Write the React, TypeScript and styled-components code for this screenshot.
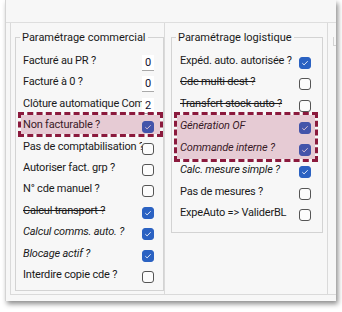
import React from "react";
import styled, { createGlobalStyle, css } from "styled-components";

const Global = createGlobalStyle`
  html, body { margin: 0; padding: 0; background: #ffffff; }
  body { font-family: Roboto, "Open Sans", sans-serif; }
  * { box-sizing: border-box; }
`;

const Stage = styled.div`
  width: 342px;
  height: 312px;
  padding-left: 5px;
  overflow: hidden;
`;

const Window = styled.div`
  width: 331px;
  height: 301px;
  background: #f7f7f7;
  border-left: 1px solid #d4d4d4;
  box-shadow: 2px 3px 5px rgba(0, 0, 0, 0.45);
  display: flex;
  flex-direction: column;
  overflow: hidden;
`;

const Header = styled.div`
  height: 23px;
  flex: none;
  border-bottom: 1px solid #dedede;
`;

const Content = styled.div`
  flex: 1;
  display: flex;
  padding: 0 0 6px 4px;
  min-height: 0;
`;

const Column = styled.div<{ $w: number; $pl: number }>`
  flex: none;
  width: ${(p) => p.$w}px;
  padding-left: ${(p) => p.$pl}px;
  border-left: 1px solid #dadada;
  border-bottom: 1px solid #dadada;
  overflow: hidden;
`;

const GroupBox = styled.fieldset<{ $w: number; $pb: number }>`
  margin: 6.5px 0 0 0;
  padding: 0 0 ${(p) => p.$pb}px 0;
  width: ${(p) => p.$w}px;
  min-width: 0;
  border: 1px solid #d3d3d3;
`;

const Legend = styled.legend<{ $ml: number }>`
  margin-left: ${(p) => p.$ml}px;
  padding: 0 2px;
  font-size: 11px;
  line-height: 15px;
  color: #1a1a1a;
  white-space: nowrap;
`;

const Rows = styled.div<{ $pl: number; $pr: number }>`
  --pl: ${(p) => p.$pl}px;
  --pr: ${(p) => p.$pr}px;
  display: flex;
  flex-direction: column;
  padding-top: 5.3px;
`;

const Highlight = styled.div<{
  $ml: number;
  $mr: number;
  $mb: number;
  $pl: number;
  $pr: number;
  $rowH: number;
}>`
  --pl: ${(p) => p.$pl}px;
  --pr: ${(p) => p.$pr}px;
  --rh: ${(p) => p.$rowH}px;
  position: relative;
  margin: -2px ${(p) => p.$mr}px ${(p) => p.$mb}px ${(p) => p.$ml}px;
  border: 3px dashed #8b1a3d;
  &::after {
    content: "";
    position: absolute;
    inset: 0;
    background: rgba(165, 30, 75, 0.2);
    pointer-events: none;
  }
`;

const Row = styled.div`
  height: var(--rh, 21.4px);
  display: flex;
  align-items: center;
  padding: 0 var(--pr) 0 var(--pl);
`;

const Label = styled.span<{ $look?: "strike" | "italic" }>`
  flex: 1;
  min-width: 0;
  overflow: hidden;
  white-space: nowrap;
  font-size: 11px;
  line-height: 15px;
  letter-spacing: -0.2px;
  color: #1a1a1a;
  ${(p) =>
    p.$look === "strike" &&
    css`
      text-decoration: line-through;
    `}
  ${(p) =>
    p.$look === "italic" &&
    css`
      font-style: italic;
    `}
`;

const Box = styled.span<{ $on?: boolean }>`
  flex: none;
  width: 12px;
  height: 12px;
  margin-top: 5px;
  border-radius: 3px;
  border: 1px solid ${(p) => (p.$on ? "#2b62c2" : "#555555")};
  background: ${(p) => (p.$on ? "#2b62c2" : "#fcfcfc")};
  display: flex;
  align-items: center;
  justify-content: center;
`;

const NumBox = styled.span`
  flex: none;
  width: 12px;
  height: 16px;
  margin-top: 5px;
  background: #ffffff;
  border-bottom: 1px solid #a9a9a9;
  font-size: 11px;
  line-height: 16px;
  text-align: center;
  color: #101030;
`;

type Item = {
  label: string;
  num?: string;
  on?: boolean;
  look?: "strike" | "italic";
};

const Check = ({ on }: { on?: boolean }) => (
  <Box $on={on}>
    {on && (
      <svg width="8" height="8" viewBox="0 0 8 8">
        <polyline
          points="1.3,4.2 3.1,5.9 6.7,2.2"
          fill="none"
          stroke="#dfe8f8"
          strokeWidth="1"
        />
      </svg>
    )}
  </Box>
);

const ItemRow = ({ item }: { item: Item }) => (
  <Row>
    <Label $look={item.look}>{item.label}</Label>
    {item.num !== undefined ? <NumBox>{item.num}</NumBox> : <Check on={item.on} />}
  </Row>
);

const commercialTop: Item[] = [
  { label: "Facturé au PR ?", num: "0" },
  { label: "Facturé à 0 ?", num: "0" },
  { label: "Clôture automatique Commande ?", num: "2" },
];
const commercialHl: Item[] = [{ label: "Non facturable ?", on: true }];
const commercialRest: Item[] = [
  { label: "Pas de comptabilisation ?" },
  { label: "Autoriser fact. grp ?" },
  { label: "N° cde manuel ?" },
  { label: "Calcul transport ?", on: true, look: "strike" },
  { label: "Calcul comms. auto. ?", on: true, look: "italic" },
  { label: "Blocage actif ?", on: true, look: "italic" },
  { label: "Interdire copie cde ?" },
];

const logTop: Item[] = [
  { label: "Expéd. auto. autorisée ?", on: true },
  { label: "Cde multi dest ?", look: "strike" },
  { label: "Transfert stock auto ?", look: "strike" },
];
const logHl: Item[] = [
  { label: "Génération OF", on: true, look: "italic" },
  { label: "Commande interne ?", on: true, look: "italic" },
];
const logRest: Item[] = [
  { label: "Calc. mesure simple ?", on: true, look: "italic" },
  { label: "Pas de mesures ?" },
  { label: "ExpeAuto => ValiderBL" },
];

export default function App() {
  return (
    <>
      <Global />
      <Stage>
        <Window>
          <Header />
          <Content>
            <Column $w={154} $pl={4}>
              <GroupBox $w={149} $pb={5}>
                <Legend $ml={4}>Paramétrage commercial</Legend>
                <Rows $pl={7} $pr={9}>
                  {commercialTop.map((it) => (
                    <ItemRow key={it.label} item={it} />
                  ))}
                  <Highlight $ml={2} $mr={0} $mb={-2} $pl={2} $pr={6} $rowH={19.4}>
                    {commercialHl.map((it) => (
                      <ItemRow key={it.label} item={it} />
                    ))}
                  </Highlight>
                  {commercialRest.map((it) => (
                    <ItemRow key={it.label} item={it} />
                  ))}
                </Rows>
              </GroupBox>
            </Column>
            <Column $w={163} $pl={6}>
              <GroupBox $w={152} $pb={8.7}>
                <Legend $ml={4}>Paramétrage logistique</Legend>
                <Rows $pl={8} $pr={11}>
                  {logTop.map((it) => (
                    <ItemRow key={it.label} item={it} />
                  ))}
                  <Highlight $ml={2} $mr={4} $mb={-3} $pl={3} $pr={4} $rowH={22}>
                    {logHl.map((it) => (
                      <ItemRow key={it.label} item={it} />
                    ))}
                  </Highlight>
                  {logRest.map((it) => (
                    <ItemRow key={it.label} item={it} />
                  ))}
                </Rows>
              </GroupBox>
            </Column>
            <Column $w={40} $pl={5}>
              <GroupBox $w={120} $pb={0}>
                <Legend $ml={0}>Paramètres</Legend>
              </GroupBox>
            </Column>
          </Content>
        </Window>
      </Stage>
    </>
  );
}
